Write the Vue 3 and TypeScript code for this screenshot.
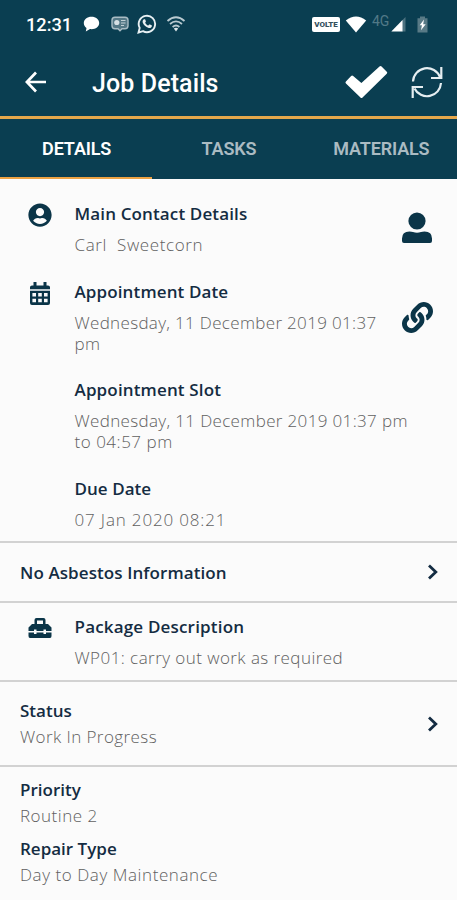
<script setup lang="ts">
import { ref } from 'vue'

interface Entry {
  title: string
  lines: string[]
  cls: string
}

const tabs: string[] = ['DETAILS', 'TASKS', 'MATERIALS']
const active = ref(0)

const schedule: Entry[] = [
  { title: 'Appointment Slot', lines: ['Wednesday, 11 December 2019 01:37 pm', 'to 04:57 pm'], cls: 'slot' },
  { title: 'Due Date', lines: ['07 Jan 2020 08:21'], cls: 'due' },
]
const summary: Entry[] = [
  { title: 'Priority', lines: ['Routine 2'], cls: 'priority' },
  { title: 'Repair Type', lines: ['Day to Day Maintenance'], cls: 'repair' },
]
</script>

<template>
  <div class="screen">
    <header class="top">
      <div class="status">
        <span class="clock">12:31</span>
        <svg class="s-chat" width="17" height="16" viewBox="0 0 17 16"><path fill="#fff" d="M8.5 0.8C4.2 0.8.8 3.4.8 7c0 2 1 3.700 2.700 4.900L2.800 15.400l4.200-2.300c.5.1 1 .1 1.500.1 4.300 0 7.700-2.600 7.700-6.200S12.800.8 8.500.8z" /></svg>
        <svg class="s-face" width="18" height="16" viewBox="0 0 18 16"><path fill="#547886" stroke="#a9bcc4" stroke-width="1.400" d="M4 1.200h10q3 0 3 3v5.500q0 3-3 3h-3l-2 2-2-2H4q-3 0-3-3V4.200q0-3 3-3z" /><circle cx="5.800" cy="6.500" r="2.600" fill="#d5dfe3" /><path stroke="#c1d0d5" stroke-width="1.200" d="M10 4.500h4.500M10 7h4.500M10 9.500h3" /></svg>
        <svg class="s-wa" width="20" height="20" viewBox="0 0 20 20"><path fill="none" stroke="#e8f0f3" stroke-width="1.900" d="M1.500 18.500l1.200-4.600A8.200 8.200 0 1 1 6 17.200z" /><path fill="#e8f0f3" d="M7 5.300c.6-.3 1-.1 1.200.3l.7 1.700c.1.400-.5 1.100-.7 1.400.7 1.300 1.700 2.300 3.100 2.900l.9-1c.3-.3.5-.2.8-.1l1.600.8c.5.3.3.9.1 1.400-.5 1.100-1.800 1.500-3 1.200-3-.8-5.200-3-6-5.400-.4-1.300.3-2.700 1.300-3.200z" /></svg>
        <svg class="s-wifi" width="20" height="16" viewBox="0 0 20 16"><g fill="none" stroke="#b9cad1" stroke-width="1.800"><path d="M1.500 5Q10-2.500 18.500 5" /><path d="M4 8q6-5.200 12 0" /><path d="M6.600 11q3.400-3 6.800 0" /></g><path fill="#dbe5e9" d="M10 15.500l-2.200-3q2.200-1.500 4.400 0z" /></svg>
        <span class="grow"></span>
        <span class="volte">VOLTE</span>
        <svg class="s-full" width="22" height="17" viewBox="0 0 22 17"><path fill="#fff" d="M.8 4.500Q11-3.500 21.200 4.500L11 16.500z" /></svg>
        <span class="net">4G</span>
        <svg class="s-sig" width="15" height="16" viewBox="0 0 15 16"><path fill="#4d7280" d="M11 4.500L14.500 1v14.500H11z" /><path fill="#fff" d="M.3 15.500L11.500 4v11.500z" /></svg>
        <svg class="s-bat" width="11" height="17" viewBox="0 0 11 17"><path fill="#587a86" d="M3 .5h5v1.700h2.500V16.500H.5V2.200H3z" /><path fill="#fff" d="M7 3.500L2.700 9.200h2.200L4 14.300l4.700-6.100H6.200z" /></svg>
      </div>
      <div class="bar">
        <svg class="back" width="22" height="22" viewBox="0 0 22 22"><path fill="none" stroke="#fff" stroke-width="2.700" d="M21 11H2M11 1.500L1.900 11 11 20.500" /></svg>
        <h1>Job Details</h1>
        <svg class="check" width="44" height="36" viewBox="0 0 44 36"><path fill="#fff" stroke="#fff" stroke-width="3" stroke-linejoin="round" d="M3 18.500l5.200-5.400L17.300 21 36.500 3.500l5.200 5.300L17.500 32.500z" /></svg>
        <svg class="sync" width="34" height="36" viewBox="0 0 34 36"><g fill="none" stroke="#e5eef1" stroke-width="2.200"><path d="M3 17.500A14 14 0 0 1 30 13M31.300 3v11H21" /><path d="M31 19A14 14 0 0 1 4.500 24.500M2.700 34v-11H13" /></g></svg>
      </div>
    </header>
    <nav class="tabs">
      <button v-for="(tab, i) in tabs" :key="tab" class="tab" :class="{ on: i === active }" @click="active = i">{{ tab }}</button>
    </nav>

    <section class="info">
      <div class="row contact">
        <div class="lead"><svg width="24" height="24" viewBox="-8 0 512 512"><path d="M248 8C111 8 0 119 0 256s111 248 248 248 248-111 248-248S385 8 248 8zm0 96c48.600 0 88 39.400 88 88s-39.400 88-88 88-88-39.400-88-88 39.400-88 88-88zm0 344c-58.700 0-111.300-26.600-146.500-68.200 18.800-35.400 55.600-59.800 98.500-59.800 2.400 0 4.800.4 7.100 1.100 13 4.200 26.600 6.900 40.900 6.900 14.300 0 28-2.700 40.900-6.900 2.300-.7 4.700-1.100 7.100-1.100 42.900 0 79.700 24.400 98.500 59.800C359.300 421.400 306.700 448 248 448z" /></svg></div>
        <div class="body">
          <h2 class="t-contact">Main Contact Details</h2>
          <p class="v-contact">Carl&nbsp; Sweetcorn</p>
        </div>
        <svg class="act" width="32" height="32" viewBox="0 0 32 32"><circle cx="16" cy="9" r="8.600" /><path d="M1 31v-4.500Q1 19.500 8.500 19.500q2 0 3.500.6 4 1.300 8 0 1.500-.6 3.500-.6Q31 19.500 31 26.500V29q0 2-2 2H3q-2 0-2-2z" /></svg>
      </div>
      <div class="row date">
        <div class="lead"><svg width="22" height="25" viewBox="0 0 22 25"><path d="M4.500 1h3v3.500h7V1h3v3.500H19q2 0 2 1.800V8.200H1V6.300Q1 4.500 3 4.500h1.500z" /><path fill-rule="evenodd" d="M1 9.800h20V22q0 2-2 2H3q-2 0-2-2zM3.400 12v3.500H7V12zM9.200 12v3.500h3.600V12zM15 12v3.500h3.600V12zM3.400 17.700v3.500H7v-3.500zM9.200 17.700v3.500h3.600v-3.500zM15 17.700v3.500h3.600v-3.500z" /></svg></div>
        <div class="body">
          <h2 class="t-date">Appointment Date</h2>
          <p class="v-date">Wednesday, 11 December 2019 01:37<br />pm</p>
        </div>
        <svg class="act" width="31" height="31" viewBox="0 0 512 512"><path d="M326.612 185.391c59.747 59.809 58.927 155.698.36 214.590-.11.12-.24.25-.36.37l-67.200 67.200c-59.270 59.270-155.699 59.262-214.960 0-59.270-59.260-59.270-155.700 0-214.960l37.106-37.106c9.840-9.840 26.786-3.300 27.294 10.606.648 17.722 3.826 35.527 9.690 52.721 1.986 5.822.567 12.262-3.783 16.612l-13.087 13.087c-28.026 28.026-28.905 73.660-1.155 101.960 28.024 28.579 74.086 28.749 102.325.51l67.200-67.190c28.191-28.191 28.073-73.757 0-101.830-3.701-3.694-7.429-6.564-10.341-8.569a16.037 16.037 0 0 1-6.947-12.606c-.396-10.567 3.348-21.456 11.698-29.806l21.054-21.055c5.521-5.521 14.182-6.199 20.584-1.731a152.482 152.482 0 0 1 20.522 17.197zM467.547 44.449c-59.261-59.262-155.690-59.270-214.960 0l-67.200 67.200c-.12.12-.25.25-.36.37-58.566 58.892-59.387 154.781.36 214.590a152.454 152.454 0 0 0 20.521 17.196c6.402 4.468 15.064 3.789 20.584-1.731l21.054-21.055c8.350-8.350 12.094-19.239 11.698-29.806a16.037 16.037 0 0 0-6.947-12.606c-2.912-2.005-6.640-4.875-10.341-8.569-28.073-28.073-28.191-73.639 0-101.830l67.200-67.190c28.239-28.239 74.300-28.069 102.325.51 27.750 28.300 26.872 73.934-1.155 101.960l-13.087 13.087c-4.350 4.350-5.769 10.790-3.783 16.612 5.864 17.194 9.042 34.999 9.690 52.721.509 13.906 17.454 20.446 27.294 10.606l37.106-37.106c59.271-59.259 59.271-155.699.001-214.959z" /></svg>
      </div>
      <div v-for="e in schedule" :key="e.title" class="row">
        <div class="lead"></div>
        <div class="body">
          <h2 :class="'t-' + e.cls">{{ e.title }}</h2>
          <p v-for="(l, i) in e.lines" :key="l" :class="'v-' + e.cls + i">{{ l }}</p>
        </div>
      </div>
    </section>

    <section class="link asbestos">
      <h2 class="t-asb">No Asbestos Information</h2>
      <svg class="chev" width="12" height="16" viewBox="0 0 12 16"><path d="M2 1.500L8.800 8 2 14.500" /></svg>
    </section>

    <section class="row package">
      <div class="lead"><svg width="24" height="22" viewBox="0 0 24 22"><path fill-rule="evenodd" d="M6.500 7V3Q6.500 1 8.500 1h7q2 0 2 2v4H20l3.500 3.500V14H18v-1.500h-2.500V14h-7v-1.500H6V14H.5v-3.500L4 7zM9 3.500V7h6V3.500z" /><path d="M.5 15.500H6V17h2.500v-1.500h7V17H18v-1.500h5.500V19q0 2-1.500 2H2Q.5 21 .5 19z" /></svg></div>
      <div class="body">
        <h2 class="t-pack">Package Description</h2>
        <p class="v-pack">WP01: carry out work as required</p>
      </div>
    </section>

    <section class="link state">
      <div>
        <h2 class="t-status">Status</h2>
        <p class="v-status">Work In Progress</p>
      </div>
      <svg class="chev" width="12" height="16" viewBox="0 0 12 16"><path d="M2 1.500L8.800 8 2 14.500" /></svg>
    </section>

    <section class="summary">
      <div v-for="e in summary" :key="e.title">
        <h2 :class="'t-' + e.cls">{{ e.title }}</h2>
        <p v-for="(l, i) in e.lines" :key="l" :class="'v-' + e.cls + i">{{ l }}</p>
      </div>
    </section>
  </div>
</template>

<style>
body { margin: 0; background: #fbfbfb; }
</style>

<style scoped>
.screen { width: 457px; height: 900px; overflow: hidden; background: #fbfbfb; font-family: 'Open Sans', 'Noto Sans', sans-serif; }
svg { display: block; flex: none; }
.top { box-sizing: border-box; height: 119px; background: #0a3e51; border-bottom: 3px solid #e5a74b; font-family: Roboto, sans-serif; color: #fff; }
.status { display: flex; align-items: center; height: 48px; padding: 0 29px 0 26px; }
.clock { width: 44px; font-size: 18.200px; font-weight: 500; white-space: nowrap; }
.s-chat { margin-left: 13px; }
.s-face { margin-left: 11px; }
.s-wa { margin-left: 8px; }
.s-wifi { margin-left: 9px; }
.grow { flex: 1; }
.volte { box-sizing: border-box; width: 28px; height: 15px; border-radius: 2px; background: #fff; color: #35515e; font-size: 8px; font-weight: 900; line-height: 15px; text-align: center; letter-spacing: -0.100px; }
.s-full { margin-left: 5px; }
.net { margin: -6px 0 0 5px; width: 17px; color: #527987; font-size: 14px; line-height: 16px; white-space: nowrap; }
.s-sig { margin-left: 2px; }
.s-bat { margin-left: 11px; }
.bar { display: flex; align-items: center; height: 68px; padding: 0 13px 0 24.500px; }
h1 { margin: 4px 0 0 45.500px; flex: 1; font-size: 25px; font-weight: 500; line-height: 30px; letter-spacing: 0.100px; }
.check { margin-right: 22px; }
.tabs { display: flex; height: 60px; background: #0a3e51; }
.tab { box-sizing: border-box; flex: 1; padding: 2px 0 0 1px; border: 0; border-bottom: 2px solid #0a3e51; background: none; color: #aabbc2; font: 600 18px/56px Roboto, sans-serif; letter-spacing: -0.150px; }
.tab.on { color: #fff; border-bottom-color: #eda344; }
h2, p { margin: 0; line-height: 21px; white-space: nowrap; }
h2 { font-size: 17px; font-weight: 600; color: #142c42; }
p { font-size: 17px; font-weight: 300; color: #606060; }
.info { box-sizing: border-box; display: flex; flex-direction: column; gap: 25.600px; height: 364px; padding-top: 24px; border-bottom: 2px solid #d2d2d2; }
.row { display: flex; }
.lead { width: 46.500px; padding-left: 28px; flex: none; }
.lead svg, .act { fill: #0b3548; }
.body h2 { margin-bottom: 10px; }
.body { flex: 1; }
.date .lead svg { margin-left: 1px; }
.act { margin: 9px 24px 0 0; }
.date .act { margin: 21px 24.500px 0 0; }
.link { box-sizing: border-box; display: flex; align-items: center; justify-content: space-between; padding: 0 18px 0 20px; border-bottom: 2px solid #d2d2d2; }
.asbestos { height: 60px; }
.package { box-sizing: border-box; height: 79px; padding-top: 13px; border-bottom: 2px solid #d2d2d2; }
.package .lead svg { margin-top: 1px; }
.state { height: 85px; }
.link h2 + p, .summary h2 + p { margin-top: 5px; }
.chev { fill: none; stroke: #142c42; stroke-width: 2.800; }
.summary { display: flex; flex-direction: column; gap: 12px; padding: 12px 20px 0; }
.t-contact { letter-spacing: 0.130px; }
.t-date { letter-spacing: 0.120px; }
.t-slot { letter-spacing: 0.150px; }
.t-due { letter-spacing: 0.050px; }
.t-asb { letter-spacing: 0.090px; }
.t-pack { letter-spacing: 0.180px; }
.v-contact { letter-spacing: 0.620px; }
.v-date { letter-spacing: 0.330px; }
.v-slot0 { letter-spacing: 0.350px; }
.v-slot1 { letter-spacing: 0.520px; }
.v-due0 { letter-spacing: 0.840px; }
.v-pack { letter-spacing: 0.440px; }
.v-status { letter-spacing: 0.420px; }
.v-priority0 { letter-spacing: 0.500px; }
.v-repair0 { letter-spacing: 0.570px; }
</style>
